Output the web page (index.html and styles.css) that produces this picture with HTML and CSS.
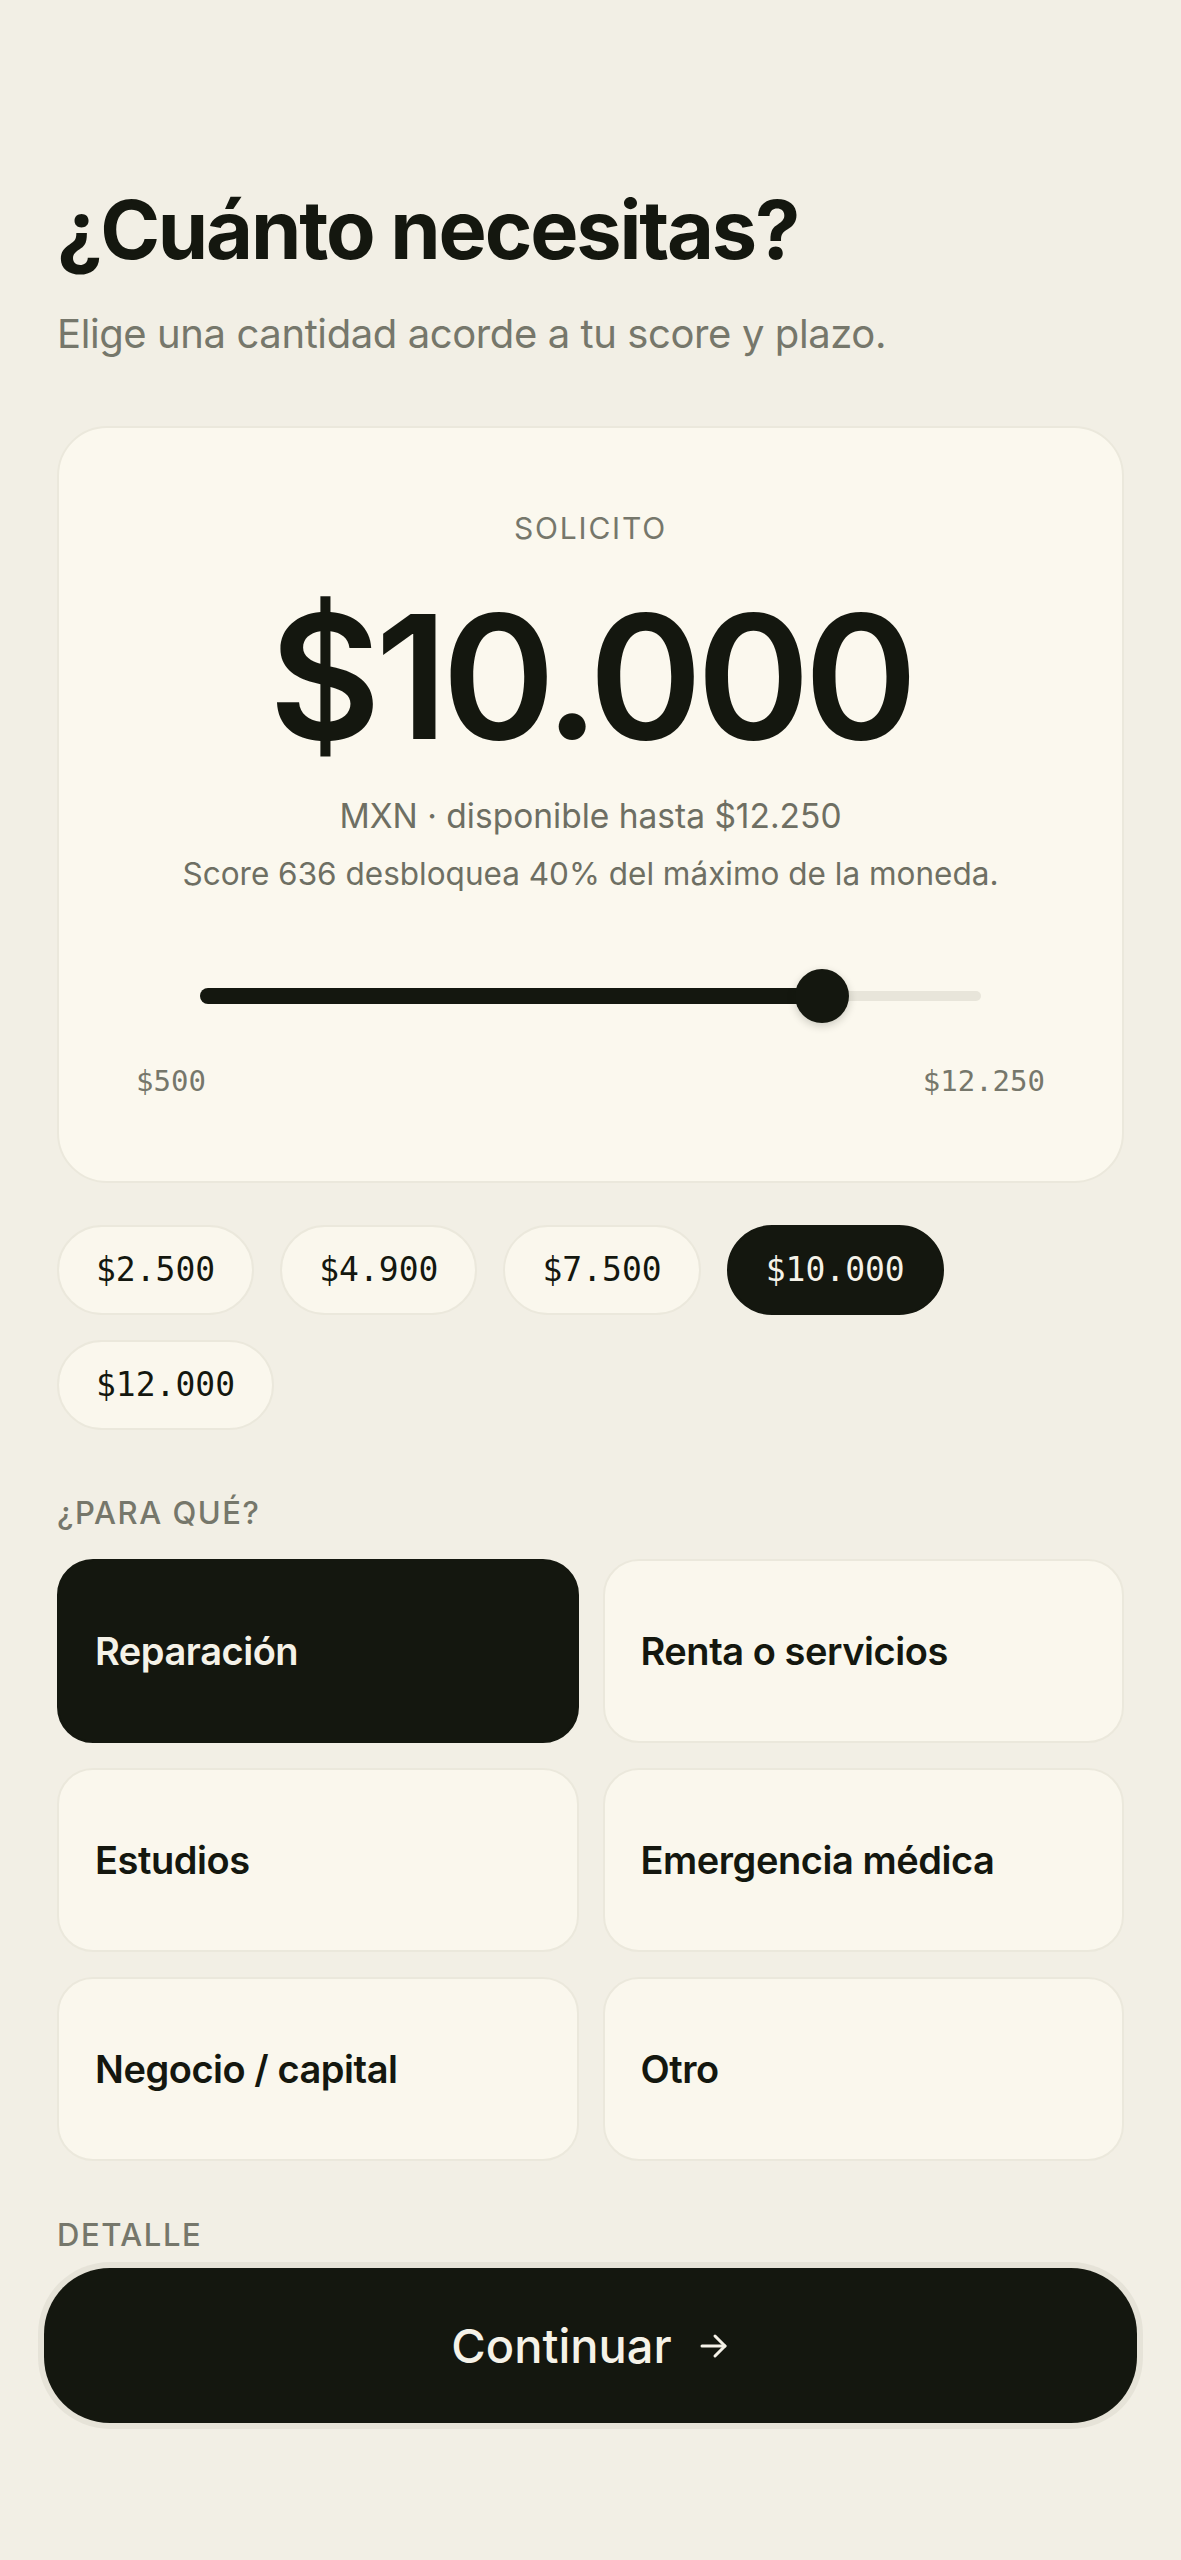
FILE: index.html
```html
<!DOCTYPE html>
<html lang="es">
<head>
    <meta charset="UTF-8">
    <meta name="viewport" content="width=device-width, initial-scale=1.0">
    <title>¿Cuánto necesitas?</title>
    <link rel="stylesheet" href="styles.css">
</head>
<body>
    <main class="screen">
        <h1 class="title">¿Cuánto necesitas?</h1>
        <p class="subtitle">Elige una cantidad acorde a tu score y plazo.</p>

        <section class="amount-card">
            <div class="amount-label">SOLICITO</div>
            <div class="amount-value">$10.000</div>
            <div class="amount-limit">MXN · disponible hasta $12.250</div>
            <div class="amount-note">Score 636 desbloquea 40% del máximo de la moneda.</div>

            <div class="slider">
                <div class="slider-track"></div>
                <div class="slider-fill" style="width: 79.6%"></div>
                <div class="slider-thumb" style="left: 79.6%"></div>
            </div>

            <div class="slider-range">
                <span>$500</span>
                <span>$12.250</span>
            </div>
        </section>

        <div class="chips">
            <button class="chip">$2.500</button>
            <button class="chip">$4.900</button>
            <button class="chip">$7.500</button>
            <button class="chip active">$10.000</button>
            <button class="chip">$12.000</button>
        </div>

        <h2 class="section-label">¿PARA QUÉ?</h2>
        <div class="purpose-grid">
            <button class="purpose active">Reparación</button>
            <button class="purpose">Renta o servicios</button>
            <button class="purpose">Estudios</button>
            <button class="purpose">Emergencia médica</button>
            <button class="purpose">Negocio / capital</button>
            <button class="purpose">Otro</button>
        </div>

        <h2 class="section-label detail-label">DETALLE</h2>

        <div class="footer">
            <button class="btn-continue">
                Continuar
                <svg width="32" height="28" viewBox="0 0 32 28" fill="none" stroke="currentColor" stroke-width="3" stroke-linecap="round" stroke-linejoin="round">
                    <path d="M4 14h23"/>
                    <path d="M17 4l10 10-10 10"/>
                </svg>
            </button>
        </div>
    </main>
</body>
</html>
```

FILE: styles.css
```css
body {
    margin: 0;
    padding: 0;
    background-color: #f2efe5;
    color: #14170f;
    font-family: Inter, "Noto Sans", sans-serif;
}
.screen {
    padding: 186px 57px 120px;
}
.title {
    margin: 0;
    font-size: 81px;
    font-weight: 700;
    letter-spacing: -0.027em;
    line-height: 1.1;
}
.subtitle {
    margin: 34px 0 0;
    font-size: 40px;
    font-weight: 400;
    color: #76776b;
    letter-spacing: -0.01em;
}
.amount-card {
    margin-top: 68px;
    background-color: #fbf8ee;
    border: 2px solid #ebe8dc;
    border-radius: 50px;
    padding: 82px 77px 82px;
    text-align: center;
}
.amount-label {
    font-size: 30px;
    letter-spacing: 0.06em;
    color: #76776b;
    line-height: 1.2;
}
.amount-value {
    margin-top: 44px;
    font-size: 172px;
    font-weight: 600;
    letter-spacing: -0.034em;
    line-height: 1;
}
.amount-limit {
    margin-top: 34px;
    font-size: 33.5px;
    color: #6e6f63;
    line-height: 1.2;
}
.amount-note {
    margin-top: 19px;
    font-size: 31.5px;
    color: #6e6f63;
    line-height: 1.2;
}
.slider {
    position: relative;
    height: 54px;
    margin: 76px 64px 0;
}
.slider-track {
    position: absolute;
    left: 0;
    right: 0;
    top: 22px;
    height: 10px;
    border-radius: 5px;
    background-color: #e8e5da;
}
.slider-fill {
    position: absolute;
    left: 0;
    top: 19px;
    height: 16px;
    border-radius: 8px;
    background-color: #14170f;
}
.slider-thumb {
    position: absolute;
    top: 0;
    width: 54px;
    height: 54px;
    margin-left: -27px;
    border-radius: 50%;
    background-color: #14170f;
    box-shadow: 0 3px 8px rgba(20, 23, 15, 0.2);
}
.slider-range {
    display: flex;
    justify-content: space-between;
    margin-top: 41px;
    font-family: "DejaVu Sans Mono", "Liberation Mono", monospace;
    font-size: 29px;
    color: #76776b;
    line-height: 1.2;
}
.chips {
    display: flex;
    flex-wrap: wrap;
    gap: 25px 26px;
    margin-top: 42px;
}
.chip {
    height: 90px;
    padding: 0 37px;
    border: 2px solid #ebe8dc;
    border-radius: 45px;
    background-color: #faf7ed;
    color: #14170f;
    font-family: "DejaVu Sans Mono", "Liberation Mono", monospace;
    font-size: 33px;
}
.chip.active {
    background-color: #14170f;
    border-color: #14170f;
    color: #f5f2e8;
}
.section-label {
    margin: 64px 0 0;
    font-size: 31px;
    font-weight: 500;
    letter-spacing: 0.05em;
    color: #76776b;
    line-height: 1.2;
}
.purpose-grid {
    display: grid;
    grid-template-columns: 1fr 1fr;
    gap: 25px 24px;
    margin-top: 28px;
}
.purpose {
    height: 184px;
    padding: 0 36px;
    border: 2px solid #ebe8dc;
    border-radius: 36px;
    background-color: #faf7ed;
    color: #14170f;
    font-family: Inter, "Noto Sans", sans-serif;
    font-size: 38px;
    font-weight: 600;
    letter-spacing: -0.012em;
    text-align: left;
}
.purpose.active {
    background-color: #14170f;
    border-color: #14170f;
    color: #f5f2e8;
}
.detail-label {
    margin-top: 55px;
}
.footer {
    margin: 15px -13px 0;
    padding: 0;
    border-radius: 70px;
    background-color: #e6e3d8;
}
.btn-continue {
    display: flex;
    align-items: center;
    justify-content: center;
    gap: 26px;
    width: 100%;
    height: 155px;
    border: none;
    border-radius: 66px;
    background-color: #14170f;
    color: #f5f2e8;
    font-family: Inter, "Noto Sans", sans-serif;
    font-size: 47px;
    font-weight: 500;
    box-shadow: 0 0 0 6px #e6e3d8;
}
```
